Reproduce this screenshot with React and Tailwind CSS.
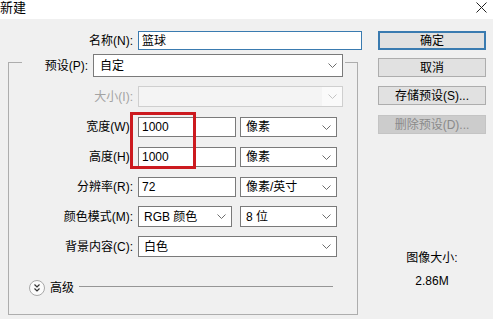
function Chevron({ light }) {
  return (
    <svg width="9" height="5" viewBox="0 0 9 5" className="shrink-0">
      <path d="M0.5 0.5 L4.5 4.5 L8.5 0.5" fill="none" stroke={light ? "#c4c4c4" : "#6d6d6d"} strokeWidth="1" />
    </svg>
  );
}

function Select({ value, w, h = "h-[21px]" }) {
  return (
    <div className={`${w} ${h} bg-white border border-[#7a7a7a] flex items-center justify-between pl-[5px] pr-[5px]`}>
      <span>{value}</span>
      <Chevron />
    </div>
  );
}

function Field({ value, w, h = "h-[20px]" }) {
  return (
    <div className={`${w} ${h} bg-white border border-[#7a7a7a] flex items-center pl-[3px]`}>
      {value}
    </div>
  );
}

function Button({ children, primary, disabled }) {
  let cls = "bg-[#e1e1e1] border border-[#adadad] text-black";
  if (primary) cls = "bg-[#e1e1e1] border-2 border-[#3a7bb0] text-black";
  if (disabled) cls = "bg-[#cccccc] border border-[#c4c4c4] text-[#8a8a8a]";
  return (
    <div className={`w-[108px] h-[19px] flex items-center justify-center ${cls}`}>
      {children}
    </div>
  );
}

export default function App() {
  return (
    <div
      className="w-[493px] h-[319px] overflow-hidden bg-[#f0f0f0] text-[12px] leading-[14px] text-black"
      style={{ fontFamily: '"Liberation Sans", "Noto Sans CJK SC", sans-serif' }}
    >
      <div className="h-[19px] bg-white flex items-start justify-between">
        <span className="text-[13px] leading-[15px]">新建</span>
        <svg width="11" height="11" viewBox="0 0 11 11" className="mt-[2px] mr-[6px]">
          <path d="M0.5 0.5 L10.5 10.5 M10.5 0.5 L0.5 10.5" stroke="#222" strokeWidth="1" fill="none" />
        </svg>
      </div>

      <div className="flex">
        <div className="w-[370px]">
          <div className="mt-[12px] flex items-center h-[19px]">
            <div className="w-[133px] text-right">名称(N):</div>
            <div className="ml-[5px] w-[224px] h-[19px] bg-white border border-[#3a7bb0] flex items-center pl-[3px]">
              篮球
            </div>
          </div>

          <div className="mt-[12px] ml-[8px] w-[350px] h-[253px] border border-[#adadad] relative">
            <div className="-mt-[9px] ml-[13px] w-[323px] h-[23px] bg-[#f0f0f0] flex items-center">
              <div className="w-[66px] text-right">预设(P):</div>
              <div className="ml-[5px] w-[250px] h-[23px] bg-white border border-[#7a7a7a] flex items-center justify-between pl-[6px] pr-[5px]">
                <span>自定</span>
                <Chevron />
              </div>
            </div>

            <div className="mt-[9px] flex items-center h-[21px]">
              <div className="w-[124px] text-right text-[#a3a3a3]">大小(I):</div>
              <div className="ml-[5px] w-[205px] h-[21px] bg-[#f4f4f4] border border-[#cfcfcf] flex justify-end">
                <div className="w-[20px] h-full bg-[#fafafa] flex items-center justify-center">
                  <Chevron light />
                </div>
              </div>
            </div>

            <div className="mt-[10px] flex items-center h-[20px]">
              <div className="w-[124px] text-right">宽度(W):</div>
              <div className="ml-[5px]"><Field value="1000" w="w-[98px]" /></div>
              <div className="ml-[4px]"><Select value="像素" w="w-[97px]" h="h-[20px]" /></div>
            </div>

            <div className="mt-[10px] flex items-center h-[20px]">
              <div className="w-[124px] text-right">高度(H):</div>
              <div className="ml-[5px]"><Field value="1000" w="w-[98px]" /></div>
              <div className="ml-[4px]"><Select value="像素" w="w-[97px]" h="h-[20px]" /></div>
            </div>

            <div className="mt-[10px] flex items-center h-[20px]">
              <div className="w-[124px] text-right">分辨率(R):</div>
              <div className="ml-[5px]"><Field value="72" w="w-[98px]" /></div>
              <div className="ml-[4px]"><Select value="像素/英寸" w="w-[97px]" h="h-[20px]" /></div>
            </div>

            <div className="mt-[9px] flex items-center h-[21px]">
              <div className="w-[124px] text-right">颜色模式(M):</div>
              <div className="ml-[5px]"><Select value="RGB 颜色" w="w-[94px]" /></div>
              <div className="ml-[8px]"><Select value="8 位" w="w-[97px]" /></div>
            </div>

            <div className="mt-[9px] flex items-center h-[21px]">
              <div className="w-[124px] text-right">背景内容(C):</div>
              <div className="ml-[5px]"><Select value="白色" w="w-[199px]" /></div>
            </div>

            <div className="mt-[23px] flex items-start h-[16px] ml-[20px] mr-[24px]">
              <svg width="16" height="16" viewBox="0 0 16 16" className="shrink-0">
                <circle cx="8" cy="8" r="7.5" fill="#fbfbfb" stroke="#a8a8a8" />
                <path d="M5.5 4.5 L8 7 L10.5 4.5 M5.5 8.5 L8 11 L10.5 8.5" fill="none" stroke="#333" strokeWidth="1.2" />
              </svg>
              <span className="ml-[5px] mt-[1px] shrink-0">高级</span>
              <div className="ml-[5px] mt-[6px] flex-1 h-[1px] bg-[#969696]" />
            </div>

            <div className="absolute left-[121px] top-[49px] w-[66px] h-[57px] border-[3px] border-[#cc1a1f]" />
          </div>
        </div>

        <div className="ml-[8px] mt-[12px] flex flex-col">
          <Button primary>确定</Button>
          <div className="mt-[8px]"><Button>取消</Button></div>
          <div className="mt-[9px]"><Button>存储预设(S)...</Button></div>
          <div className="mt-[10px]"><Button disabled>删除预设(D)...</Button></div>
          <div className="mt-[117px] text-center">图像大小:</div>
          <div className="mt-[9px] text-center">2.86M</div>
        </div>
      </div>
    </div>
  );
}
